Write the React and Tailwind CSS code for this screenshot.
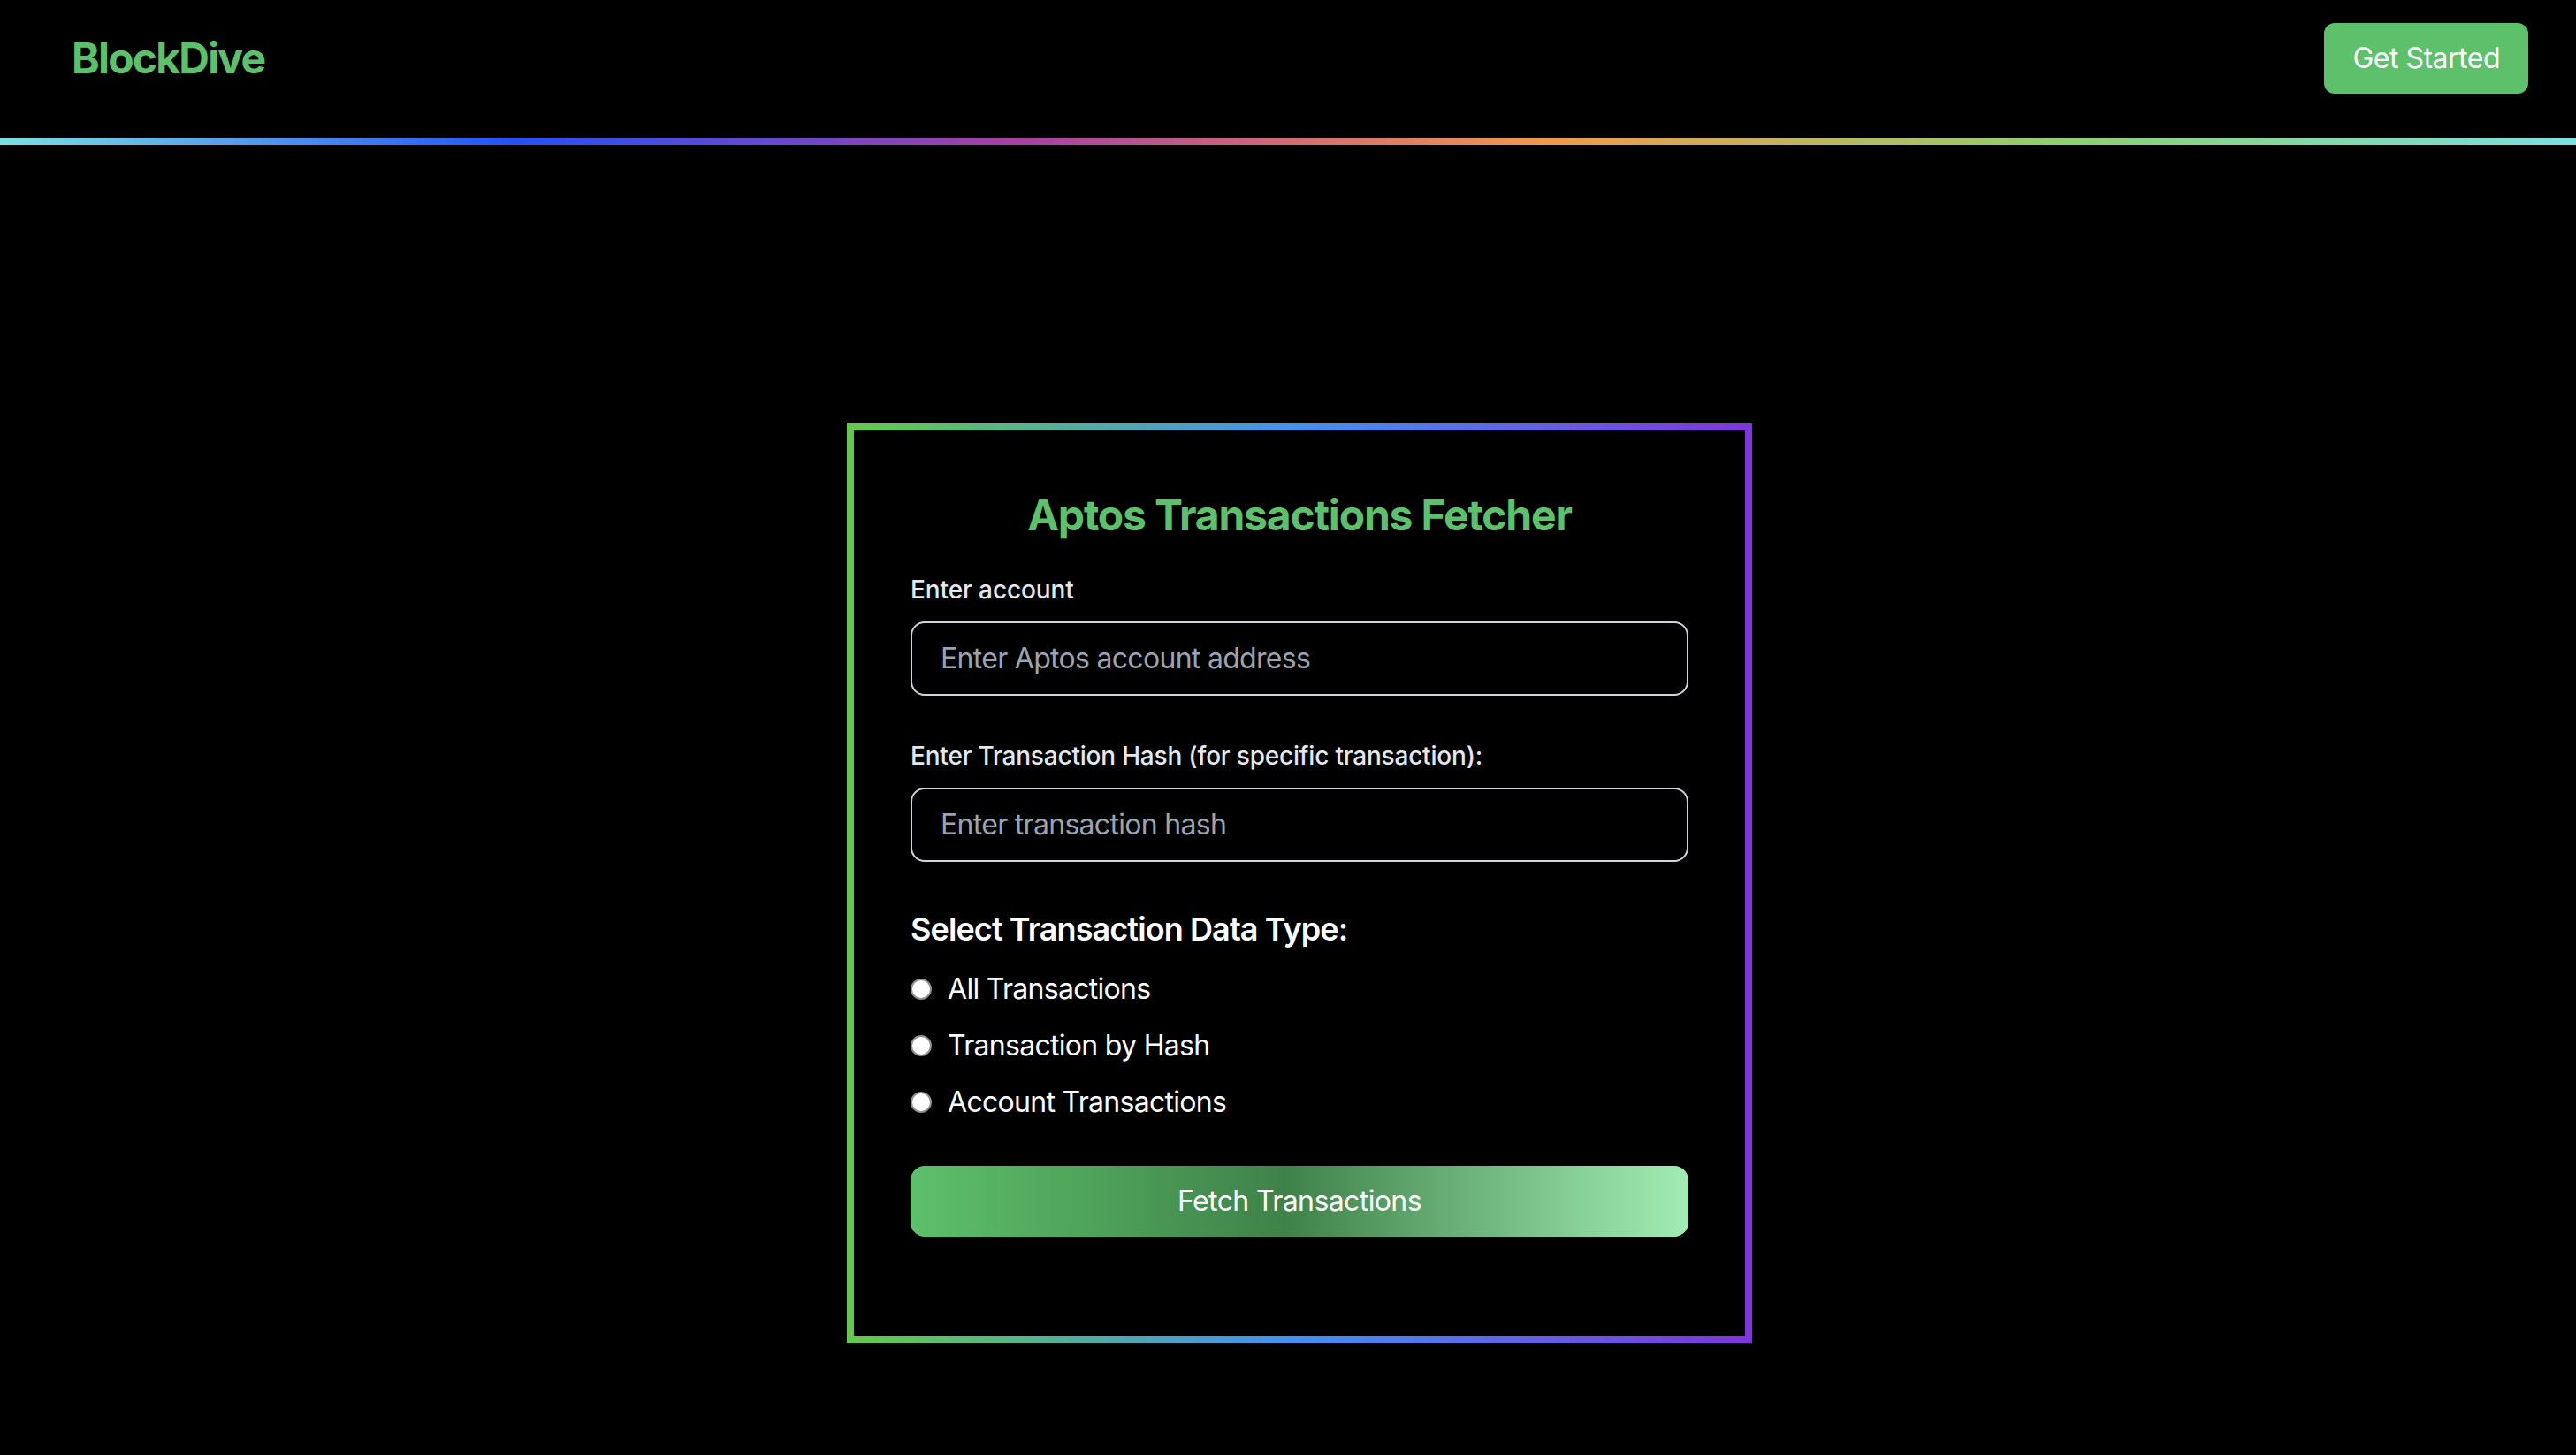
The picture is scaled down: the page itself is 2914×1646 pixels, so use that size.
import { useState } from 'react';

const options = [
  { id: 'all', label: 'All Transactions' },
  { id: 'hash', label: 'Transaction by Hash' },
  { id: 'account', label: 'Account Transactions' },
];

const App = () => {
  const [account, setAccount] = useState('');
  const [hash, setHash] = useState('');
  const [dataType, setDataType] = useState('');

  return (
    <div className="min-h-screen bg-black font-['Inter','Noto_Sans',sans-serif] antialiased">
      <header className="flex items-center justify-between pl-[81px] pr-[54px] pt-[26px] pb-[50px]">
        <span className="text-[48px] leading-[64px] font-bold text-[#5cc16a] tracking-[-1.8px]">BlockDive</span>
        <button className="rounded-[12px] bg-[#5cc16a] px-[32px] py-[16px] text-[32px] leading-[48px] text-white tracking-[-0.5px]">
          Get Started
        </button>
      </header>
      <div className="h-[8px] bg-[linear-gradient(90deg,#7ae0e3,#2451f8_20%,#a941a2_40%,#f09a4a_60%,#8ed06f_80%,#7ae0e3)]" />

      <main className="flex justify-center pt-[315px] pl-[26px]">
        <div className="w-[1024px] p-[8px] bg-[linear-gradient(90deg,#66c94c,#4490f0_50%,#8034dc)]">
          <div className="bg-black px-[64px] pt-[64px] pb-[112px]">
            <h1 className="text-center text-[48px] leading-[64px] font-bold text-[#5cc16a] mb-[32px] tracking-[-1.2px]">
              Aptos Transactions Fetcher
            </h1>

            <div className="mb-[48px]">
              <label className="block text-[28px] leading-[40px] font-medium text-[#e5e7eb] mb-[16px] tracking-[-0.1px]">Enter account</label>
              <input
                type="text"
                value={account}
                onChange={(e) => setAccount(e.target.value)}
                placeholder="Enter Aptos account address"
                className="w-full bg-black border-[2px] border-[#d1d5db] rounded-[16px] px-[32px] py-[16px] text-[32px] leading-[48px] tracking-[-0.7px] text-white placeholder:text-[#9ca3af] outline-none"
              />
            </div>

            <div className="mb-[48px]">
              <label className="block text-[28px] leading-[40px] font-medium text-[#e5e7eb] mb-[16px] tracking-[-0.2px]">
                Enter Transaction Hash (for specific transaction):
              </label>
              <input
                type="text"
                value={hash}
                onChange={(e) => setHash(e.target.value)}
                placeholder="Enter transaction hash"
                className="w-full bg-black border-[2px] border-[#d1d5db] rounded-[16px] px-[32px] py-[16px] text-[32px] leading-[48px] tracking-[-0.7px] text-white placeholder:text-[#9ca3af] outline-none"
              />
            </div>

            <h2 className="text-[36px] leading-[56px] font-semibold text-white mb-[16px] tracking-[-0.9px]">Select Transaction Data Type:</h2>
            <div className="flex flex-col gap-[16px]">
              {options.map((opt) => (
                <label key={opt.id} className="flex items-center text-[32px] leading-[48px] text-white tracking-[-0.7px]">
                  <input
                    type="radio"
                    name="dataType"
                    checked={dataType === opt.id}
                    onChange={() => setDataType(opt.id)}
                    className="appearance-none w-[24px] h-[24px] rounded-full bg-white border-[2px] border-[#8f8f8f] mr-[18px] checked:border-[7px] checked:border-[#5cc16a]"
                  />
                  {opt.label}
                </label>
              ))}
            </div>

            <button className="mt-[48px] w-full rounded-[16px] py-[16px] text-[32px] leading-[48px] tracking-[-0.6px] text-white bg-[linear-gradient(90deg,#5dc06b,#3f8249_48%,#a2edb5)]">
              Fetch Transactions
            </button>
          </div>
        </div>
      </main>
    </div>
  );
};

export default App;
